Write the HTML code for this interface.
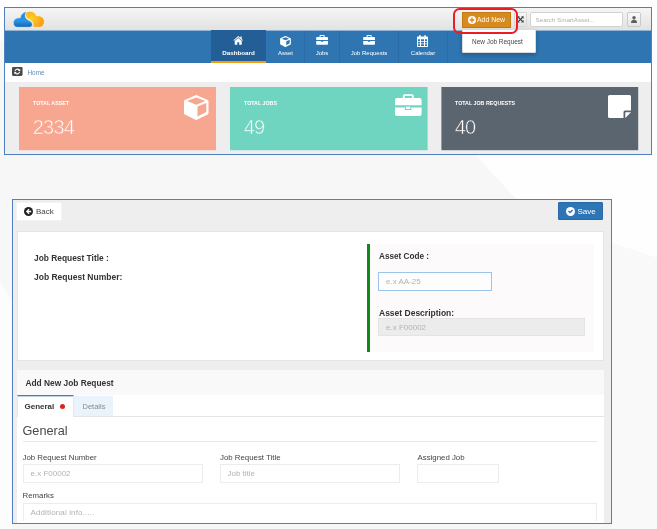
<!DOCTYPE html>
<html lang="en">
<head>
<meta charset="utf-8">
<title>SmartAsset - Add New Job Request</title>
<style>
*{box-sizing:border-box;margin:0;padding:0}
html,body{width:657px;height:529px;overflow:hidden}
html{background:#fefefe}
body{filter:blur(0.3px)}
body{position:relative;background:#fefefe;font-family:"Liberation Sans",sans-serif;color:#333}
.abs{position:absolute}
.t{position:absolute;white-space:nowrap;line-height:1;transform:translateY(-50%)}
.b{font-weight:bold}
.c{transform:translate(-50%,-50%)}
svg{position:absolute;overflow:visible}
/* panels */
#p1{left:4px;top:7px;width:648px;height:148px;border:1px solid #4f81c2;background:#eeeeee}
#p2{left:12px;top:199px;width:600px;height:325px;border:1px solid #4f81c2;background:#eeeeee}
#topbar{left:5px;top:8px;width:646px;height:22px;background:linear-gradient(#f5f5f5,#e2e2e2)}
#nav{left:5px;top:30px;width:646px;height:33px;background:#2e75b1;border-top:1px solid #8eb3d5}
#crumb{left:5px;top:63px;width:646px;height:19px;background:#fff}
.sep{position:absolute;top:31px;width:1px;height:32px;background:#2b6ca8}
.card{position:absolute;top:87px;height:63px}
.nv{color:#fff;font-size:6px}
.lbl{color:#fff;font-size:5.3px;font-weight:bold}
.num{color:#fff;font-size:20px;letter-spacing:-0.75px}
.inp{position:absolute;background:#fff;border:1px solid #ececec}
.ph{color:#b3b3b3;font-size:8px}
.fl{color:#444;font-size:7.85px}
</style>
</head>
<body>
<!-- faint background shapes -->
<svg class="abs" style="left:0;top:0" width="657" height="529" viewBox="0 0 657 529">
  <polygon points="0,40 10,44 476,155 516,199 612,243 657,258 657,529 0,529" fill="#f7f7f8"/>
  <polygon points="613,243 657,258 657,529 613,529" fill="#f9f9fa"/>
  <polygon points="0,282 12,300 12,529 0,529" fill="#fcfcfd"/>
</svg>

<!-- ===== Panel 1 : dashboard ===== -->
<div id="p1" class="abs"></div>
<div id="topbar" class="abs"></div>
<div id="nav" class="abs"></div>
<div id="crumb" class="abs"></div>

<!-- logo -->
<svg style="left:12.8px;top:10.7px" width="32" height="17" viewBox="0 0 32 17">
  <defs>
    <linearGradient id="gb" x1="0" y1="0" x2="0" y2="1"><stop offset="0" stop-color="#1f86d8"/><stop offset="0.6" stop-color="#2c93e4"/><stop offset="1" stop-color="#0f62b4"/></linearGradient>
    <radialGradient id="go" cx="0.3" cy="0.45" r="0.8"><stop offset="0" stop-color="#ffd21f"/><stop offset="1" stop-color="#f6951a"/></radialGradient>
  </defs>
  <path d="M12.6 2.6 C13.6 0.9 15.6 0.1 17.6 0.3 C20.6 0.5 22.8 2.4 23.3 4.8 C27.6 4 31.4 6.6 31.4 10.4 C31.4 13.8 29.4 16.3 26.6 16.3 L19.4 16.3 C21 13.6 20 10.8 17.6 9.4 C14.6 8.4 11.8 6 12.6 2.600 Z" fill="url(#go)" stroke="#fbf6ec" stroke-width="0.7"/>
  <path d="M13.8 0.3 C10.4 1.2 7.6 3.600 7.2 6.900 C3.4 6.500 0.200 8.700 0.200 11.900 C0.200 14.500 2 16.300 4.400 16.300 L16.400 16.300 C18.400 16.300 19.600 14.900 19.400 13.200 C19.200 11.200 17.600 10 15.800 9.300 C13 8.200 10.600 5 13.800 0.300 Z" fill="url(#gb)" stroke="#f4f4f4" stroke-width="0.7"/>
</svg>

<!-- nav active tab -->
<div class="abs" style="left:211px;top:30px;width:55px;height:33px;background:#235f96"></div>
<div class="abs" style="left:211px;top:61px;width:55px;height:2px;background:#f39c12"></div>
<div class="sep" style="left:304px"></div>
<div class="sep" style="left:339px"></div>
<div class="sep" style="left:398px"></div>
<div class="sep" style="left:447px"></div>

<!-- nav icons -->
<svg style="left:233px;top:36.300px" width="10.5" height="8.8" viewBox="0 0 11 10"><path d="M5.500 0 L0 4.700 L0.700 5.500 L5.500 1.500 L10.300 5.500 L11 4.700 L9.400 3.300 L9.400 0.600 L7.900 0.600 L7.900 2 Z M5.500 2.300 L1.500 5.700 L1.500 10 L4.400 10 L4.400 7 L6.600 7 L6.600 10 L9.500 10 L9.500 5.700 Z" fill="#fff"/></svg>
<svg style="left:279.500px;top:35.700px" width="11" height="11" viewBox="0 0 24.5 25"><path d="M11.600 0.200 Q12.250 -0.100 12.900 0.200 L23.700 4.900 Q24.500 5.300 24.500 6.200 V18.300 Q24.500 19.200 23.700 19.600 L12.900 24.800 Q12.250 25.100 11.600 24.800 L0.800 19.600 Q0 19.200 0 18.300 V6.200 Q0 5.300 0.800 4.900 Z" fill="#fff"/><path d="M12.250 3 L20.400 6.100 L12.250 9.400 L4.100 6.100 Z" fill="#2e75b1"/><path d="M14 12 L21.800 8.600 V16.600 L14 20.800 Z" fill="#2e75b1"/></svg>
<svg style="left:316px;top:35.200px" width="12.2" height="9.800" viewBox="0 0 12 10"><path d="M4 0 L8 0 L8.600 0.600 L8.600 2 L11.300 2 Q12 2 12 2.700 L12 5.200 L0 5.200 L0 2.700 Q0 2 0.700 2 L3.400 2 L3.400 0.600 Z M4.400 1 L4.400 2 L7.600 2 L7.600 1 Z M0 6 L4.800 6 L4.800 7 L7.200 7 L7.200 6 L12 6 L12 9.300 Q12 10 11.300 10 L0.700 10 Q0 10 0 9.300 Z" fill="#fff" fill-rule="evenodd"/></svg>
<svg style="left:363px;top:35.200px" width="12.2" height="9.800" viewBox="0 0 12 10"><path d="M4 0 L8 0 L8.600 0.600 L8.600 2 L11.300 2 Q12 2 12 2.700 L12 5.200 L0 5.200 L0 2.700 Q0 2 0.700 2 L3.400 2 L3.400 0.600 Z M4.400 1 L4.400 2 L7.600 2 L7.600 1 Z M0 6 L4.800 6 L4.800 7 L7.200 7 L7.200 6 L12 6 L12 9.300 Q12 10 11.300 10 L0.700 10 Q0 10 0 9.300 Z" fill="#fff" fill-rule="evenodd"/></svg>
<svg style="left:417px;top:35px" width="11" height="12" viewBox="0 0 11 12"><path d="M0.800 1.500 L10.200 1.500 Q11 1.500 11 2.300 L11 11.200 Q11 12 10.200 12 L0.800 12 Q0 12 0 11.200 L0 2.300 Q0 1.500 0.800 1.500 Z M1 4.200 L1 6 L3 6 L3 4.200 Z M4 4.200 L4 6 L7 6 L7 4.200 Z M8 4.200 L8 6 L10 6 L10 4.200 Z M1 6.800 L1 8.500 L3 8.500 L3 6.800 Z M4 6.800 L4 8.500 L7 8.500 L7 6.800 Z M8 6.800 L8 8.500 L10 8.500 L10 6.800 Z M1 9.300 L1 11 L3 11 L3 9.300 Z M4 9.300 L4 11 L7 11 L7 9.300 Z M8 9.300 L8 11 L10 11 L10 9.300 Z" fill="#fff" fill-rule="evenodd"/><rect x="2.200" y="0" width="1.400" height="3" rx="0.600" fill="#fff"/><rect x="7.400" y="0" width="1.400" height="3" rx="0.600" fill="#fff"/></svg>

<!-- nav labels -->
<div class="t c nv b" style="left:238.500px;top:52.700px;font-size:6.25px">Dashboard</div>
<div class="t c nv" style="left:285.500px;top:52.700px">Asset</div>
<div class="t c nv" style="left:322px;top:52.700px">Jobs</div>
<div class="t c nv" style="left:369px;top:52.700px">Job Requests</div>
<div class="t c nv" style="left:423px;top:52.700px">Calendar</div>

<!-- top-right controls -->
<div class="abs" style="left:462px;top:12px;width:48.500px;height:15.500px;background:#d88a1d;border:1px solid #c07a14"></div>
<svg style="left:468px;top:15.500px" width="8" height="8" viewBox="0 0 8 8"><circle cx="4" cy="4" r="4" fill="#fff"/><path d="M3.300 1.600 H4.700 V3.300 H6.400 V4.700 H4.700 V6.400 H3.300 V4.700 H1.600 V3.300 H3.300 Z" fill="#d98a1c"/></svg>
<div class="t" style="left:477px;top:19.500px;color:#fff;font-size:6.9px">Add New</div>
<div class="abs" style="left:514px;top:12px;width:13px;height:15px;background:linear-gradient(#f7f7f7,#e4e4e4);border:1px solid #d6d6d6;border-radius:1px"></div>
<svg style="left:516.900px;top:15.800px" width="7" height="6.800" viewBox="0 0 10 10"><path d="M0.300 0.300 H4.200 L2.900 1.600 L5 3.700 L7.100 1.600 L5.800 0.300 H9.700 V4.200 L8.400 2.900 L6.300 5 L8.400 7.100 L9.700 5.800 V9.700 H5.800 L7.100 8.400 L5 6.300 L2.900 8.400 L4.200 9.700 H0.300 V5.800 L1.600 7.100 L3.700 5 L1.600 2.900 L0.300 4.200 Z" fill="#4a4a4a"/></svg>
<div class="abs" style="left:530px;top:12px;width:93px;height:15px;background:#fff;border:1px solid #d2d2d2;border-radius:2px"></div>
<div class="t" style="left:535.500px;top:19.700px;color:#b0b0b0;font-size:6.25px">Search SmartAsset...</div>
<div class="abs" style="left:627px;top:12px;width:14px;height:15px;background:linear-gradient(#fafafa,#e6e6e6);border:1px solid #c9c9c9;border-radius:2px"></div>
<svg style="left:631px;top:16px" width="6" height="7" viewBox="0 0 7 8"><circle cx="3.500" cy="2" r="2" fill="#606060"/><path d="M0 8 Q0 4.300 3.500 4.300 Q7 4.300 7 8 Z" fill="#606060"/></svg>

<!-- dropdown -->
<div class="abs" style="left:462px;top:29px;width:74px;height:24px;background:#fff;border:1px solid #dcdcdc;border-radius:1px;box-shadow:0 2px 4px rgba(0,0,0,.22)"></div>
<div class="t" style="left:472px;top:41.500px;color:#444;font-size:6.45px">New Job Request</div>

<div class="abs" style="left:452.500px;top:8px;width:65px;height:26.300px;border:2px solid #ec1c24;border-radius:6.500px"></div>

<!-- breadcrumb -->
<svg style="left:11.500px;top:67.300px" width="10.6" height="9" viewBox="0 0 11 9.400"><rect x="0" y="0" width="11" height="9.400" rx="1.200" fill="#4a4a4a"/><path d="M2.600 4.400 A3 3 0 0 1 7.800 2.600 L8.600 1.800 V4.300 H6.100 L7 3.400 A1.900 1.900 0 0 0 3.700 4.400 Z M8.400 5 A3 3 0 0 1 3.200 6.800 L2.400 7.600 V5.100 H4.900 L4 6 A1.900 1.900 0 0 0 7.300 5 Z" fill="#fff"/></svg>
<div class="t" style="left:27.500px;top:72.500px;color:#5f8bbb;font-size:6.4px">Home</div>

<!-- cards -->
<svg style="left:0;top:0" width="657" height="160" viewBox="0 0 657 160"><rect x="19" y="87" width="197" height="63.200" fill="#f7a68f"/><rect x="230" y="87" width="197.600" height="63.200" fill="#70d5c0"/><rect x="441.400" y="87" width="196.800" height="63.200" fill="#5b6570"/></svg>
<div class="t lbl" style="left:33px;top:104.300px">TOTAL ASSET</div>
<div class="t lbl" style="left:244px;top:104.300px">TOTAL JOBS</div>
<div class="t lbl" style="left:455px;top:104.300px">TOTAL JOB REQUESTS</div>
<div class="t num" style="left:32.700px;top:127.300px;-webkit-text-stroke:0.55px #f7a68f">2334</div>
<div class="t num" style="left:243.700px;top:127.300px;-webkit-text-stroke:0.55px #70d5c0">49</div>
<div class="t num" style="left:454.700px;top:127.300px;-webkit-text-stroke:0.55px #5b6570">40</div>
<!-- card icons -->
<svg style="left:183.800px;top:95px" width="24.5" height="25" viewBox="0 0 24.5 25"><path d="M11.600 0.200 Q12.250 -0.100 12.900 0.200 L23.700 4.900 Q24.500 5.300 24.500 6.200 V18.300 Q24.500 19.200 23.700 19.600 L12.900 24.800 Q12.250 25.100 11.600 24.800 L0.800 19.600 Q0 19.200 0 18.300 V6.200 Q0 5.300 0.800 4.900 Z" fill="#fff"/><path d="M12.250 2.500 L21.400 6.100 L12.250 9.800 L3.100 6.100 Z" fill="#f7a68f"/><path d="M13.500 11.600 L22.300 8 V17 L13.500 21.600 Z" fill="#f7a68f"/></svg>
<svg style="left:395px;top:93.700px" width="26.6" height="22.3" viewBox="0 0 27 22"><path d="M9.800 0 H17.200 Q19 0 19 1.800 V3.800 H25 Q27 3.800 27 5.800 V11.200 H0 V5.800 Q0 3.800 2 3.800 H8 V1.800 Q8 0 9.800 0 Z M9.800 1.800 V3.800 H17.200 V1.800 Z M0 13.300 H10 V16 H16.500 V13.300 H27 V20 Q27 22 25 22 H2 Q0 22 0 20 Z" fill="#fff" fill-rule="evenodd"/><rect x="11" y="12.600" width="4.500" height="2.300" fill="#fff"/></svg>
<svg style="left:608px;top:95px" width="23" height="23" viewBox="0 0 23 23"><path d="M1.500 0 H21.500 Q23 0 23 1.500 V15.500 H17 Q15.500 15.500 15.500 17 V23 H1.500 Q0 23 0 21.500 V1.500 Q0 0 1.500 0 Z" fill="#fff"/><path d="M17.300 17.300 H23 L17.300 23 Z" fill="#fff"/></svg>

<!-- ===== Panel 2 : form ===== -->
<div id="p2" class="abs"></div>
<!-- Back -->
<div class="abs" style="left:17px;top:203px;width:44px;height:17px;background:#fff;box-shadow:0 0 0 0.500px #f7f7f7"></div>
<svg style="left:24px;top:207px" width="9" height="9" viewBox="0 0 9 9"><circle cx="4.500" cy="4.500" r="4.500" fill="#222"/><path d="M4.600 1.800 L5.500 2.700 L4.400 3.800 H7.200 V5.200 H4.400 L5.500 6.300 L4.600 7.200 L1.900 4.500 Z" fill="#fff"/></svg>
<div class="t" style="left:36px;top:211.500px;color:#444;font-size:8px">Back</div>
<!-- Save -->
<div class="abs" style="left:558px;top:202px;width:45px;height:18px;background:#2e75b6;border:1px solid #2a69a3;border-radius:1px"></div>
<svg style="left:566px;top:206.500px" width="9" height="9" viewBox="0 0 9 9"><circle cx="4.500" cy="4.500" r="4.500" fill="#fff"/><path d="M2 4.600 L3 3.600 L4 4.600 L6.100 2.500 L7.100 3.500 L4 6.600 Z" fill="#2e75b6"/></svg>
<div class="t" style="left:577.500px;top:211.500px;color:#fff;font-size:8px">Save</div>

<!-- white card 1 -->
<div class="abs" style="left:17px;top:231px;width:586.500px;height:130px;background:#fff;border:1px solid #e6e3e3"></div>
<div class="t b" style="left:34px;top:258.200px;color:#333;font-size:8.4px">Job Request Title :</div>
<div class="t b" style="left:34px;top:277px;color:#333;font-size:8.5px">Job Request Number:</div>
<div class="abs" style="left:367px;top:244px;width:227px;height:108px;background:#fcfafa;border-left:3px solid #0e8a16"></div>
<div class="t b" style="left:379px;top:256.500px;color:#333;font-size:8.2px">Asset Code :</div>
<div class="inp" style="left:378px;top:272px;width:114px;height:19px;border-color:#9cc3ec;background:#fefdfd"></div>
<div class="t ph" style="left:386px;top:282px">e.x AA-25</div>
<div class="t b" style="left:379px;top:312.500px;color:#333;font-size:8.5px">Asset Description:</div>
<div class="inp" style="left:378px;top:318px;width:207px;height:18px;background:#ececec;border-color:#e4e4e4"></div>
<div class="t ph" style="left:386px;top:327.500px">e.x F00002</div>

<!-- white card 2 -->
<div class="abs" style="left:17px;top:370px;width:586.500px;height:153px;background:#fff"></div>
<div class="abs" style="left:17px;top:370px;width:586.500px;height:25px;background:#f9f9f9"></div>
<div class="t b" style="left:25.500px;top:382.500px;color:#333;font-size:8.35px">Add New Job Request</div>
<!-- tabs -->
<div class="abs" style="left:17px;top:416px;width:586.500px;height:1px;background:#e5e5e5"></div>
<div class="abs" style="left:73px;top:396px;width:40px;height:20px;background:#eaf3fb"></div>
<div class="abs" style="left:17px;top:395px;width:56.500px;height:22px;background:#fff;border-top:1px solid #3f82b3;border-right:1px solid #e6e6e6;border-left:1px solid #e6e6e6;box-shadow:inset 0 1px 0 rgba(63,130,179,.35)"></div>
<div class="t b" style="left:24.500px;top:406.500px;color:#333;font-size:8px">General</div>
<div class="abs" style="left:59.500px;top:403.500px;width:5.600px;height:5.600px;border-radius:50%;background:#dc231c"></div>
<div class="t" style="left:82.500px;top:406.500px;color:#8a8a8a;font-size:7.500px">Details</div>
<!-- section -->
<div class="t" style="left:22.500px;top:430.500px;color:#4a4a4a;font-size:12.7px">General</div>
<div class="abs" style="left:22.500px;top:441px;width:574.500px;height:1px;background:#e6e6e6"></div>
<div class="t fl" style="left:22.500px;top:457.500px">Job Request Number</div>
<div class="t fl" style="left:220px;top:457.500px">Job Request Title</div>
<div class="t fl" style="left:417.500px;top:457.500px">Assigned Job</div>
<div class="inp" style="left:22.500px;top:464px;width:180px;height:19px"></div>
<div class="inp" style="left:220px;top:464px;width:179.500px;height:19px"></div>
<div class="inp" style="left:417px;top:464px;width:82px;height:19px"></div>
<div class="t ph" style="left:30.500px;top:474px">e.x F00002</div>
<div class="t ph" style="left:227.500px;top:474px">Job title</div>
<div class="t fl" style="left:22.500px;top:496px">Remarks</div>
<div class="inp" style="left:22.500px;top:503px;width:574.500px;height:18.500px;border-bottom:0"></div>
<div class="t ph" style="left:30.500px;top:512.500px;letter-spacing:0.12px">Additional info.....</div>
<!-- panel bottom border re-drawn on top -->
<div class="abs" style="left:17px;top:521px;width:586.500px;height:2px;background:#fff"></div>
<div class="abs" style="left:13px;top:523px;width:598px;height:1px;background:#4f81c2"></div>
</body>
</html>
